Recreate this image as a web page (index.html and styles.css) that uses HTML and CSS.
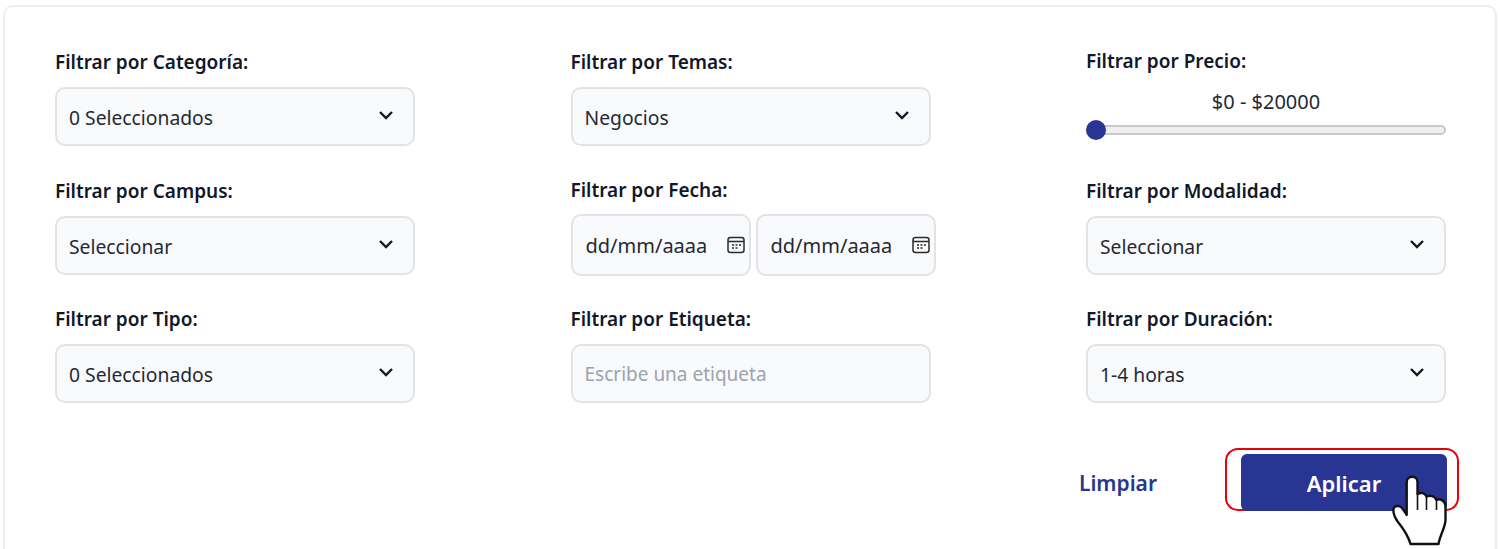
FILE: index.html
```html
<!DOCTYPE html>
<html lang="es">
  <head>
    <meta charset="UTF-8" />
    <meta name="viewport" content="width=device-width, initial-scale=1.0" />
    <title>Filtros</title>
    <link rel="stylesheet" href="styles.css">
  </head>
  <body>
    <div class="card">
      <div class="columnas">
        <div class="columna">
          <div class="campo">
            <label>Filtrar por Categoría:</label>
            <div class="caja">
              <span>0 Seleccionados</span>
              <svg class="flecha" viewBox="0 0 16 10"><path d="M2 2l6 6 6-6" /></svg>
            </div>
          </div>
          <div class="campo">
            <label>Filtrar por Campus:</label>
            <div class="caja">
              <span>Seleccionar</span>
              <svg class="flecha" viewBox="0 0 16 10"><path d="M2 2l6 6 6-6" /></svg>
            </div>
          </div>
          <div class="campo">
            <label>Filtrar por Tipo:</label>
            <div class="caja">
              <span>0 Seleccionados</span>
              <svg class="flecha" viewBox="0 0 16 10"><path d="M2 2l6 6 6-6" /></svg>
            </div>
          </div>
        </div>

        <div class="columna">
          <div class="campo">
            <label>Filtrar por Temas:</label>
            <div class="caja">
              <span>Negocios</span>
              <svg class="flecha" viewBox="0 0 16 10"><path d="M2 2l6 6 6-6" /></svg>
            </div>
          </div>
          <div class="campo campo-fecha">
            <label>Filtrar por Fecha:</label>
            <div class="fechas">
              <div class="caja fecha">
                <span>dd/mm/aaaa</span>
                <svg class="calendario" viewBox="0 0 18 18">
                  <rect x="1" y="1.5" width="16" height="15" rx="2.5" />
                  <path d="M1 5.5h16M5 9h2M8.5 9h2M12 9h2M5 12h2M8.5 12h2" />
                </svg>
              </div>
              <div class="caja fecha">
                <span>dd/mm/aaaa</span>
                <svg class="calendario" viewBox="0 0 18 18">
                  <rect x="1" y="1.5" width="16" height="15" rx="2.5" />
                  <path d="M1 5.5h16M5 9h2M8.5 9h2M12 9h2M5 12h2M8.5 12h2" />
                </svg>
              </div>
            </div>
          </div>
          <div class="campo">
            <label>Filtrar por Etiqueta:</label>
            <input class="caja" type="text" placeholder="Escribe una etiqueta" />
          </div>
        </div>

        <div class="columna">
          <div class="campo campo-precio">
            <label>Filtrar por Precio:</label>
            <div class="rango">$0 - $20000</div>
            <div class="pista"><div class="mango"></div></div>
          </div>
          <div class="campo">
            <label>Filtrar por Modalidad:</label>
            <div class="caja">
              <span>Seleccionar</span>
              <svg class="flecha" viewBox="0 0 16 10"><path d="M2 2l6 6 6-6" /></svg>
            </div>
          </div>
          <div class="campo">
            <label>Filtrar por Duración:</label>
            <div class="caja">
              <span>1-4 horas</span>
              <svg class="flecha" viewBox="0 0 16 10"><path d="M2 2l6 6 6-6" /></svg>
            </div>
          </div>
        </div>
      </div>

      <div class="botones">
        <button class="limpiar">Limpiar</button>
        <div class="resaltado">
          <button class="aplicar">Aplicar</button>
          <svg class="mano" viewBox="0 0 70 84">
            <path class="mano-fondo" d="M26.7 50V17C26.7 10 37.5 10 37.5 17V29C41 27 45 28 46.5 31.5C50 30 55 31 56.5 35C60 33 65.5 36 65.5 41V55C65.5 62 60 70 58.5 79H30.5C28 70 22 62 18 57C15 53 13 48 13.5 44C14 41 18 40 21 42C23 44 25 47 26.7 50Z" />
            <path class="mano-linea" d="M37.5 29V45M46.5 31.5V45M56.5 35V45" />
          </svg>
        </div>
      </div>
    </div>
  </body>
</html>
```

FILE: styles.css
```css
* {
  box-sizing: border-box;
}

html,
body {
  height: 100%;
}

body {
  font-family: "Noto Sans", Arial, sans-serif;
  background-color: #ffffff;
  color: #1f2937;
  margin: 0;
  padding: 5px 3px 0;
  overflow: hidden;
}

.card {
  background-color: #ffffff;
  border: 2px solid #eceef2;
  border-bottom: none;
  border-radius: 10px 10px 0 0;
  height: 544px;
  padding: 43px 49px 0 50px;
}

.columnas {
  display: flex;
  justify-content: space-between;
}

.columna {
  width: 360px;
  display: flex;
  flex-direction: column;
}

.campo {
  height: 128px;
}

.campo:first-child {
  height: 129px;
}

label {
  display: block;
  height: 24px;
  line-height: 24px;
  margin-bottom: 13px;
  font-size: 19px;
  font-weight: 600;
  color: #111827;
}

.caja {
  display: flex;
  align-items: center;
  justify-content: space-between;
  width: 100%;
  height: 59px;
  padding: 1px 19px 0 12px;
  background-color: #f9fafb;
  border: 2px solid #e1e3e8;
  border-radius: 10px;
  font-family: inherit;
  font-size: 19.3px;
  color: #1f2937;
}

input.caja {
  font-size: 19px;
}

input.caja::placeholder {
  color: #9ca3af;
  opacity: 1;
}

.flecha {
  width: 16px;
  height: 10px;
  margin-top: -5px;
  fill: none;
  stroke: #111827;
  stroke-width: 2.4;
}

.campo-fecha label {
  margin-top: -1px;
  margin-bottom: 12px;
}

.fechas {
  display: flex;
  gap: 5px;
  width: 365px;
}

.fecha {
  flex: 1;
  height: 62px;
  padding: 0 4px 0 13px;
  font-size: 20px;
}

.calendario {
  width: 18px;
  height: 18px;
  margin-top: -1px;
  fill: none;
  stroke: #2b2b2b;
  stroke-width: 1.5;
}

.campo-precio label {
  margin-top: -1px;
  margin-bottom: 0;
}

.rango {
  margin-top: 15px;
  height: 28px;
  line-height: 28px;
  text-align: center;
  font-size: 20px;
}

.pista {
  position: relative;
  margin-top: 9px;
  height: 10px;
  background-color: #efefef;
  border: 2px solid #c9c9c9;
  border-radius: 5px;
}

.mango {
  position: absolute;
  left: -2px;
  top: -7px;
  width: 20px;
  height: 20px;
  border-radius: 50%;
  background-color: #283593;
}

.botones {
  display: flex;
  justify-content: flex-end;
  align-items: center;
  gap: 68px;
  margin-top: 13px;
  margin-right: -13px;
}

.limpiar {
  margin-top: 6px;
  padding: 0;
  border: none;
  background: none;
  font-family: inherit;
  font-size: 21px;
  font-weight: 600;
  color: #283593;
}

.resaltado {
  position: relative;
  width: 234px;
  height: 63px;
  padding: 4px 10px 0 14px;
  border: 2px solid #e8000b;
  border-radius: 13px;
}

.aplicar {
  display: block;
  width: 100%;
  height: 57px;
  border: none;
  border-radius: 6px;
  background-color: #283593;
  color: #ffffff;
  font-family: inherit;
  font-size: 22px;
  font-weight: 600;
}

.mano {
  position: absolute;
  left: 153px;
  top: 15px;
  width: 70px;
  height: 84px;
}

.mano-fondo {
  fill: #ffffff;
  stroke: #111111;
  stroke-width: 2.4;
  stroke-linejoin: round;
}

.mano-linea {
  fill: none;
  stroke: #111111;
  stroke-width: 1.6;
}
```
